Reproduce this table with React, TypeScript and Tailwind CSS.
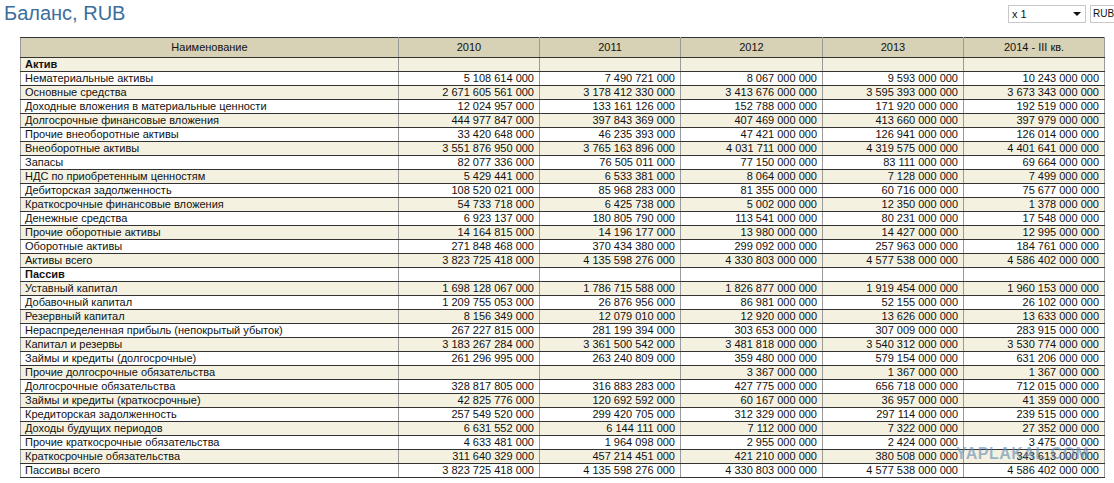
const years = ["2010", "2011", "2012", "2013", "2014 - III кв."];

type Row = { name: string; values?: string[]; section?: boolean };

const rows: Row[] = [
  { name: "Актив", section: true },
  { name: "Нематериальные активы", values: ["5 108 614 000", "7 490 721 000", "8 067 000 000", "9 593 000 000", "10 243 000 000"] },
  { name: "Основные средства", values: ["2 671 605 561 000", "3 178 412 330 000", "3 413 676 000 000", "3 595 393 000 000", "3 673 343 000 000"] },
  { name: "Доходные вложения в материальные ценности", values: ["12 024 957 000", "133 161 126 000", "152 788 000 000", "171 920 000 000", "192 519 000 000"] },
  { name: "Долгосрочные финансовые вложения", values: ["444 977 847 000", "397 843 369 000", "407 469 000 000", "413 660 000 000", "397 979 000 000"] },
  { name: "Прочие внеоборотные активы", values: ["33 420 648 000", "46 235 393 000", "47 421 000 000", "126 941 000 000", "126 014 000 000"] },
  { name: "Внеоборотные активы", values: ["3 551 876 950 000", "3 765 163 896 000", "4 031 711 000 000", "4 319 575 000 000", "4 401 641 000 000"] },
  { name: "Запасы", values: ["82 077 336 000", "76 505 011 000", "77 150 000 000", "83 111 000 000", "69 664 000 000"] },
  { name: "НДС по приобретенным ценностям", values: ["5 429 441 000", "6 533 381 000", "8 064 000 000", "7 128 000 000", "7 499 000 000"] },
  { name: "Дебиторская задолженность", values: ["108 520 021 000", "85 968 283 000", "81 355 000 000", "60 716 000 000", "75 677 000 000"] },
  { name: "Краткосрочные финансовые вложения", values: ["54 733 718 000", "6 425 738 000", "5 002 000 000", "12 350 000 000", "1 378 000 000"] },
  { name: "Денежные средства", values: ["6 923 137 000", "180 805 790 000", "113 541 000 000", "80 231 000 000", "17 548 000 000"] },
  { name: "Прочие оборотные активы", values: ["14 164 815 000", "14 196 177 000", "13 980 000 000", "14 427 000 000", "12 995 000 000"] },
  { name: "Оборотные активы", values: ["271 848 468 000", "370 434 380 000", "299 092 000 000", "257 963 000 000", "184 761 000 000"] },
  { name: "Активы всего", values: ["3 823 725 418 000", "4 135 598 276 000", "4 330 803 000 000", "4 577 538 000 000", "4 586 402 000 000"] },
  { name: "Пассив", section: true },
  { name: "Уставный капитал", values: ["1 698 128 067 000", "1 786 715 588 000", "1 826 877 000 000", "1 919 454 000 000", "1 960 153 000 000"] },
  { name: "Добавочный капитал", values: ["1 209 755 053 000", "26 876 956 000", "86 981 000 000", "52 155 000 000", "26 102 000 000"] },
  { name: "Резервный капитал", values: ["8 156 349 000", "12 079 010 000", "12 920 000 000", "13 626 000 000", "13 633 000 000"] },
  { name: "Нераспределенная прибыль (непокрытый убыток)", values: ["267 227 815 000", "281 199 394 000", "303 653 000 000", "307 009 000 000", "283 915 000 000"] },
  { name: "Капитал и резервы", values: ["3 183 267 284 000", "3 361 500 542 000", "3 481 818 000 000", "3 540 312 000 000", "3 530 774 000 000"] },
  { name: "Займы и кредиты (долгосрочные)", values: ["261 296 995 000", "263 240 809 000", "359 480 000 000", "579 154 000 000", "631 206 000 000"] },
  { name: "Прочие долгосрочные обязательства", values: ["", "", "3 367 000 000", "1 367 000 000", "1 367 000 000"] },
  { name: "Долгосрочные обязательства", values: ["328 817 805 000", "316 883 283 000", "427 775 000 000", "656 718 000 000", "712 015 000 000"] },
  { name: "Займы и кредиты (краткосрочные)", values: ["42 825 776 000", "120 692 592 000", "60 167 000 000", "36 957 000 000", "41 359 000 000"] },
  { name: "Кредиторская задолженность", values: ["257 549 520 000", "299 420 705 000", "312 329 000 000", "297 114 000 000", "239 515 000 000"] },
  { name: "Доходы будущих периодов", values: ["6 631 552 000", "6 144 111 000", "7 112 000 000", "7 322 000 000", "27 352 000 000"] },
  { name: "Прочие краткосрочные обязательства", values: ["4 633 481 000", "1 964 098 000", "2 955 000 000", "2 424 000 000", "3 475 000 000"] },
  { name: "Краткосрочные обязательства", values: ["311 640 329 000", "457 214 451 000", "421 210 000 000", "380 508 000 000", "343 613 000 000"] },
  { name: "Пассивы всего", values: ["3 823 725 418 000", "4 135 598 276 000", "4 330 803 000 000", "4 577 538 000 000", "4 586 402 000 000"] },
];

export default function App() {
  return (
    <div className="relative w-[1114px] h-[483px] overflow-hidden bg-white font-['Liberation_Sans',Arial,sans-serif] text-[#111]">
      {/* top bar */}
      <div className="flex items-start justify-between h-[37px]">
        <h1 className="pl-[4px] pt-[1px] text-[20px] leading-[24px] text-[#3c6e9c]">Баланс, RUB</h1>
        <div className="flex items-center gap-[4px] pt-[5px] -mr-[6px]">
          <div className="flex items-center justify-between w-[78px] h-[18px] border border-[#c8c8c8] pl-[3px] pr-[4px] text-[11px]">
            <span>x 1</span>
            <span className="w-0 h-0 border-l-[4px] border-r-[4px] border-t-[4px] border-l-transparent border-r-transparent border-t-[#111]" />
          </div>
          <div className="h-[18px] w-[30px] border border-[#c8c8c8] pl-[2px] text-[10px] leading-[16px]">RUB</div>
        </div>
      </div>

      {/* balance table */}
      <table className="ml-[20px] w-[1084px] table-fixed border-collapse text-[11px] leading-[13px]">
        <colgroup>
          <col className="w-[378px]" />
          <col className="w-[141px]" />
          <col className="w-[141px]" />
          <col className="w-[142px]" />
          <col className="w-[141px]" />
          <col className="w-[141px]" />
        </colgroup>
        <thead>
          <tr className="bg-[#d7d1b5]">
            <th className="h-[20px] border-t border-t-[#333] border-b border-b-[#333] border-x border-x-[#9a9a9a] font-normal text-center">
              Наименование
            </th>
            {years.map(y => (
              <th key={y} className="h-[20px] border-t border-t-[#333] border-b border-b-[#333] border-x border-x-[#9a9a9a] font-normal text-center">
                {y}
              </th>
            ))}
          </tr>
        </thead>
        <tbody>
          {rows.map((row, i) => (
            <tr key={row.name} className={i % 2 === 0 ? "bg-[#f4f1e1]" : "bg-white"}>
              <td className={`h-[14px] p-0 pl-[4px] border-b border-b-[#333] border-x border-x-[#9a9a9a] whitespace-nowrap ${row.section ? "font-bold" : ""}`}>
                {row.name}
              </td>
              {years.map((y, j) => (
                <td key={y} className="h-[14px] p-0 pr-[5px] border-b border-b-[#333] border-x border-x-[#9a9a9a] text-right whitespace-nowrap">
                  {row.values ? row.values[j] : ""}
                </td>
              ))}
            </tr>
          ))}
        </tbody>
      </table>

      {/* watermark */}
      <div className="absolute left-[956px] top-[445px] text-[16px] leading-[18px] font-bold tracking-[0.5px] text-[#5f88b4]/60 pointer-events-none">
        YAPLAKAL.COM
      </div>
    </div>
  );
}
